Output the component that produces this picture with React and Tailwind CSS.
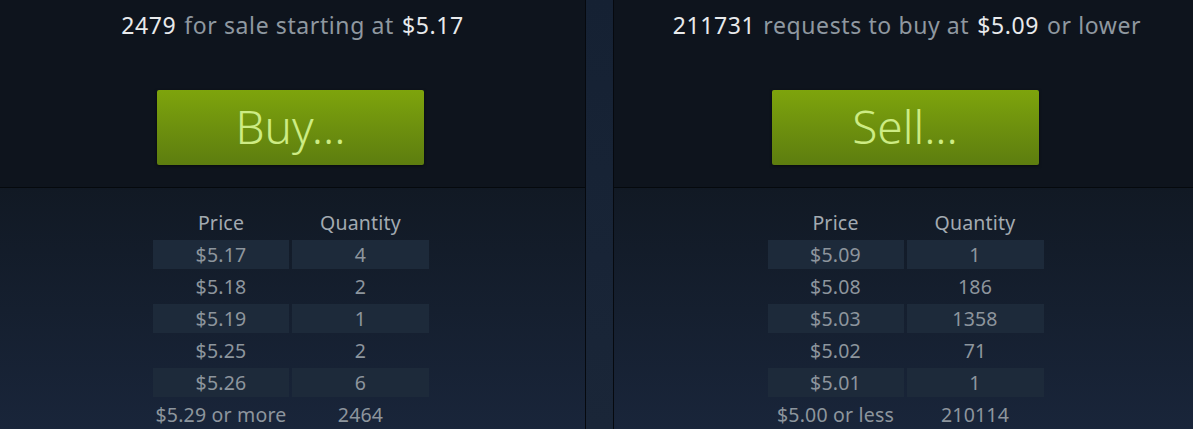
import React from 'react';

const sellRows = [
    ['$5.17', '4'],
    ['$5.18', '2'],
    ['$5.19', '1'],
    ['$5.25', '2'],
    ['$5.26', '6'],
    ['$5.29 or more', '2464'],
];

const buyRows = [
    ['$5.09', '1'],
    ['$5.08', '186'],
    ['$5.03', '1358'],
    ['$5.02', '71'],
    ['$5.01', '1'],
    ['$5.00 or less', '210114'],
];

const font = { fontFamily: '"Noto Sans", "Open Sans", Arial, sans-serif' };

const OrderTable = ({ rows }) => (
    <div className="grid grid-cols-[136px_137px] gap-x-[3px] gap-y-[3px] text-[19.5px] tracking-[0.2px] mr-[3px]">
        <div className="h-[29px] flex items-center justify-center text-[#a3aab1]">Price</div>
        <div className="h-[29px] flex items-center justify-center text-[#a3aab1]">Quantity</div>
        {rows.map(([price, qty], i) => {
            const shaded = i % 2 === 0 && i < 5;
            const cell = `h-[29px] flex items-center justify-center text-[#8d959d] ${shaded ? 'bg-[#1d2a3a]' : ''}`;
            return (
                <React.Fragment key={price}>
                    <div className={cell}>{price}</div>
                    <div className={cell}>{qty}</div>
                </React.Fragment>
            );
        })}
    </div>
);

const Panel = ({ headline, label, rows, width }) => (
    <div className={`${width} shrink-0 flex flex-col`}>
        <div className="h-[187px] bg-[#0e141d] flex flex-col items-center">
            <div className="h-[51px] flex items-center text-[23px] tracking-[0.6px] text-[#8f98a0] whitespace-nowrap">
                {headline}
            </div>
            <button className="mt-[39px] mr-[4px] w-[267px] h-[75px] rounded-[2px] bg-gradient-to-b from-[#7ea40c] to-[#5d7d0f] text-[#cdec84] text-[46px] font-light leading-none pb-[4px] shadow-[0_1px_3px_rgba(0,0,0,0.5)]">
                {label}
            </button>
        </div>
        <div className="h-px bg-[#05090d]" />
        <div className="flex-1 bg-gradient-to-b from-[#111924] to-[#19253a] flex justify-center pt-[20px]">
            <OrderTable rows={rows} />
        </div>
    </div>
);

const Num = ({ children, pos }) => {
    const gap = pos === 'first' ? 'mr-[8px]' : pos === 'last' ? 'ml-[8px]' : 'mx-[8px]';
    return <span className={`text-[#e8eaec] ${gap}`}>{children}</span>;
};

export default function App() {
    return (
        <div className="w-[1193px] h-[429px] overflow-hidden flex bg-[#0e141d]" style={font}>
            <Panel
                width="w-[585px]"
                label="Buy..."
                rows={sellRows}
                headline={
                    <span>
                        <Num pos="first">2479</Num>for sale starting at<Num pos="last">$5.17</Num>
                    </span>
                }
            />
            <div className="w-px shrink-0 bg-[#06090e]" />
            <div className="w-[27px] shrink-0 bg-gradient-to-b from-[#152133] to-[#1a2638]" />
            <div className="w-px shrink-0 bg-[#06090e]" />
            <Panel
                width="w-[586px]"
                label="Sell..."
                rows={buyRows}
                headline={
                    <span>
                        <Num pos="first">211731</Num>requests to buy at<Num>$5.09</Num>or lower
                    </span>
                }
            />
        </div>
    );
}
